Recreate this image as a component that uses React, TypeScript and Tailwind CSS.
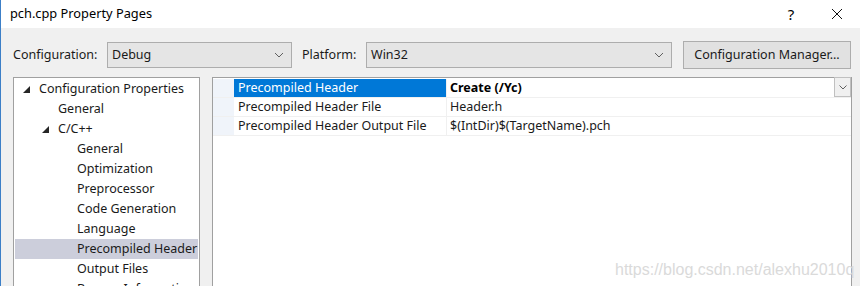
import React from "react";

const treeItems: { label: string; indent: number; arrow?: boolean; selected?: boolean }[] = [
  { label: "Configuration Properties", indent: 0, arrow: true },
  { label: "General", indent: 1 },
  { label: "C/C++", indent: 1, arrow: true },
  { label: "General", indent: 2 },
  { label: "Optimization", indent: 2 },
  { label: "Preprocessor", indent: 2 },
  { label: "Code Generation", indent: 2 },
  { label: "Language", indent: 2 },
  { label: "Precompiled Header", indent: 2, selected: true },
  { label: "Output Files", indent: 2 },
  { label: "Browse Information", indent: 2 },
];

const rows = [
  { name: "Precompiled Header", value: "Create (/Yc)", selected: true },
  { name: "Precompiled Header File", value: "Header.h" },
  { name: "Precompiled Header Output File", value: "$(IntDir)$(TargetName).pch" },
];

function Chevron() {
  return (
    <svg width="10" height="6" viewBox="0 0 10 6" className="shrink-0">
      <path d="M1 1 L5 5 L9 1" fill="none" stroke="#606060" strokeWidth="1" />
    </svg>
  );
}

function Combo({ value, className }: { value: string; className: string }) {
  return (
    <div className={`h-[26px] bg-[#e5e5e5] border border-[#adadad] flex items-center justify-between pl-[4px] pr-[7px] ${className}`}>
      <span>{value}</span>
      <Chevron />
    </div>
  );
}

function TreeRow({ item }: { item: (typeof treeItems)[number] }) {
  const pad = item.indent === 0 ? "pl-[8px]" : item.indent === 1 ? "pl-[27px]" : "pl-[46px]";
  return (
    <div className={`h-[20px] flex items-center ${pad} ${item.selected ? "bg-[#cccedb]" : ""}`}>
      <span className="w-[16px] shrink-0 flex items-center">
        {item.arrow ? (
          <svg width="7" height="7" viewBox="0 0 7 7">
            <polygon points="7,0 7,7 0,7" fill="#262626" />
          </svg>
        ) : null}
      </span>
      <span className="whitespace-nowrap">{item.label}</span>
    </div>
  );
}

export default function App() {
  return (
    <div
      className="w-[860px] h-[286px] overflow-hidden bg-[#f0f0f0] border-l border-[#3c7fc7] text-[12.5px] text-[#1a1a1a] flex flex-col"
      style={{ fontFamily: '"Noto Sans", "Noto Sans CJK SC", sans-serif' }}
    >
      <div className="h-[28px] bg-white flex items-center justify-between pl-[9px] shrink-0">
        <span className="text-[12.8px] text-black">pch.cpp Property Pages</span>
        <div className="flex items-center text-[15px] text-black">
          <span className="w-[46px] text-center">?</span>
          <span className="w-[46px] text-center flex justify-center">
            <svg width="12" height="12" viewBox="0 0 12 12">
              <path d="M1 1 L11 11 M11 1 L1 11" stroke="#111" strokeWidth="1" />
            </svg>
          </span>
        </div>
      </div>

      <div className="flex items-center mt-[13px] pl-[12px] shrink-0">
        <span className="w-[94px]">Configuration:</span>
        <Combo value="Debug" className="w-[185px]" />
        <span className="ml-[10px] w-[64px]">Platform:</span>
        <Combo value="Win32" className="w-[306px]" />
        <div className="ml-[11px] h-[28px] w-[168px] bg-[#e1e1e1] border border-[#adadad] flex items-center justify-center">
          Configuration Manager...
        </div>
      </div>

      <div className="flex mt-[8px] pl-[12px] gap-[12px] flex-1">
        <div className="w-[187px] bg-white border border-[#a0a0a0] border-b-0 pt-[1px] pl-[1px] pr-[1px] overflow-hidden">
          {treeItems.map((item, i) => (
            <TreeRow key={i} item={item} />
          ))}
        </div>
        <div className="w-[640px] bg-white border border-[#a0a0a0] border-b-0 relative">
          <div className="flex flex-col pt-[1px]">
            {rows.map((r, i) => (
              <div key={i} className="flex h-[19px] border-b border-[#f0f0f0]">
                <div className="w-[21px] bg-[#f0f4fa] shrink-0" />
                <div
                  className={`w-[213px] flex items-center pl-[4px] shrink-0 border-r border-[#f0f0f0] ${
                    r.selected ? "bg-[#0078d7] text-white" : ""
                  }`}
                >
                  {r.name}
                </div>
                <div className={`flex-1 flex items-center pl-[3px] ${r.selected ? "font-bold text-black" : ""}`}>
                  {r.value}
                </div>
                {r.selected ? (
                  <div className="w-[17px] h-[20px] -mt-[2px] bg-[#f0f0f0] border border-[#c0c0c0] flex items-center justify-center">
                    <svg width="8" height="5" viewBox="0 0 8 5">
                      <path d="M0.5 0.5 L4 4 L7.5 0.5" fill="none" stroke="#606060" strokeWidth="1" />
                    </svg>
                  </div>
                ) : null}
              </div>
            ))}
          </div>
          <div
            className="absolute left-[402px] top-[180px] text-[16px] text-[#dadada] whitespace-nowrap"
            style={{ fontFamily: '"Liberation Sans", Arial, sans-serif' }}
          >
            https://blog.csdn.net/alexhu2010q
          </div>
        </div>
      </div>
    </div>
  );
}
